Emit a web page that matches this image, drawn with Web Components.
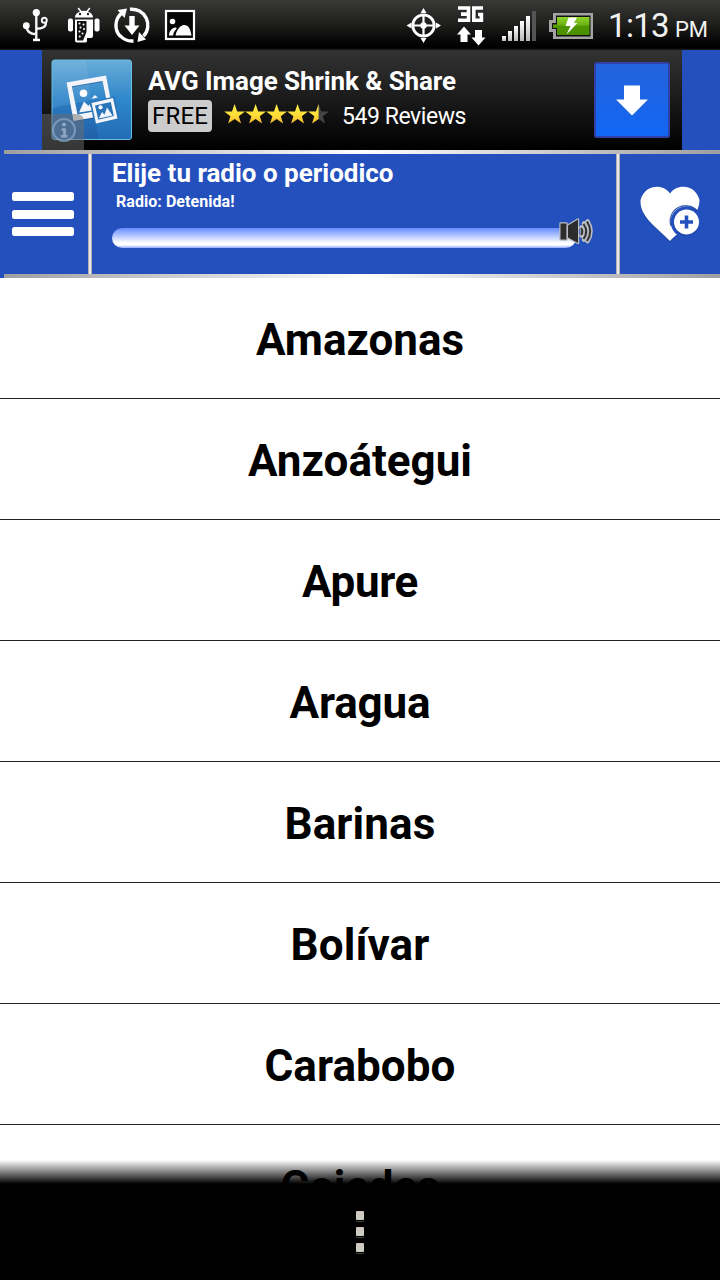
<!DOCTYPE html>
<html lang="es">
<head>
<meta charset="utf-8">
<title>Radios</title>
<style>
html,body{
    margin:0;
    padding:0;
}
body{
    width:720px;
    height:1280px;
    overflow:hidden;
    background:#fff;
    font-family:Roboto,"Liberation Sans",sans-serif;
}
</style>
</head>
<body>
<radio-app>
    <status-bar></status-bar>
    <ad-banner></ad-banner>
    <player-bar></player-bar>
    <state-list>
        <state-row w="208">Amazonas</state-row>
        <state-row w="224">Anzoátegui</state-row>
        <state-row w="116">Apure</state-row>
        <state-row w="141">Aragua</state-row>
        <state-row w="151">Barinas</state-row>
        <state-row w="139">Bolívar</state-row>
        <state-row w="191">Carabobo</state-row>
        <state-row w="159">Cojedes</state-row>
    </state-list>
    <bottom-menu></bottom-menu>
</radio-app>

<script>
// text with a fixed width, the letter spacing takes up the difference
class FitLabel extends HTMLElement{
    constructor(){
        super();
        this.attachShadow({mode:'open'});
        this.shadowRoot.innerHTML = `
        <style>
        :host{ display:inline-block; white-space:nowrap; }
        span{ display:inline-block; }
        </style>
        <span><slot></slot></span>
        `;
    }

    connectedCallback(){
        let span = this.shadowRoot.querySelector("span");
        let want = Number(this.getAttribute("w"));
        let width = span.getBoundingClientRect().width;
        let count = this.textContent.length;
        if (want && width && count){
            span.style.letterSpacing = (want - width) / count + "px";
        }
    }
}

class RadioApp extends HTMLElement{
    constructor(){
        super();
        this.attachShadow({mode:'open'});
        this.shadowRoot.innerHTML = `
        <style>
        :host{
            display:flex;
            flex-direction:column;
            position:relative;
            width:720px;
            height:1280px;
            overflow:hidden;
        }
        </style>
        <slot></slot>
        `;
    }
}

class StatusBar extends HTMLElement{
    constructor(){
        super();
        this.attachShadow({mode:'open'});
    }

    connectedCallback(){
        this.shadowRoot.innerHTML = `
        <style>
        :host{
            display:flex;
            flex:none;
            height:50px;
            justify-content:space-between;
            color:#f2f2f2;
            background:linear-gradient(#393937 0,#1d1d1c 25px,#000 46px,#000 48px,#1c1c1c 50px);
        }
        svg{ display:block; flex:none; }
        .right{ display:flex; }
        .clock{
            display:flex;
            align-items:baseline;
            width:112px;
            padding-top:7px;
            box-sizing:border-box;
            line-height:38px;
        }
        .time{ font-size:33px; width:67px; }
        .pm{ font-size:22px; }
        </style>
        <svg width="220" height="50" viewBox="0 0 220 50" fill="#fff" stroke="none">
            <g fill="none" stroke="#f4f4f4" stroke-width="2.4">
                <path d="M36.3 12V39M26.5 26c0 6 4 8 9.8 8.3M36.3 28.8c6 0 10-2 9.500-6.500"/>
                <circle cx="44.300" cy="20.300" r="2.500" stroke-width="2"/>
            </g>
            <circle cx="36.300" cy="12.500" r="3.600"/>
            <circle cx="26.300" cy="25.700" r="3.400"/>
            <rect x="33" y="38.700" width="7" height="2.500"/>
            <g>
                <path d="M75 17.500c0-3.500 3-5 5-6l-2.500-3 1.200-.9 2.900 3.300q2.400-.5 4.800 0l2.900-3.300 1.200.9-2.500 3c2 1 5 2.500 5 6z"/>
                <rect x="68" y="18.500" width="5" height="13" rx="2"/>
                <rect x="94.500" y="18.500" width="5" height="13" rx="2"/>
                <path d="M75 19.500h18V36q0 2-2 2h-4v3q0 1.500-2 1.500h-8q-2 0-2-2z"/>
            </g>
            <path d="M77 21H86.500v11l-3.500 8.500h-6z" fill="#141414"/>
            <g fill="#fff">
                <circle cx="80" cy="14" r="1.200" fill="#222"/><circle cx="88" cy="14" r="1.200" fill="#222"/>
                <circle cx="79.500" cy="23.500" r="1"/><circle cx="83.500" cy="24.500" r="1"/><circle cx="80.500" cy="27.500" r="1"/>
                <circle cx="84" cy="29" r="1"/><circle cx="79.500" cy="31.500" r="1"/><circle cx="82.500" cy="33.500" r="1"/><circle cx="79.800" cy="36.500" r="1"/>
            </g>
            <g fill="none" stroke="#fff" stroke-width="3.400">
                <path d="M120.500 36.500A16 16 0 0 1 122 12.800M130 9.300A16 16 0 0 1 143.500 36.200M133.500 41A16 16 0 0 1 120 35.500"/>
            </g>
            <path d="M117.500 10l9.500-1.500-2.500 9.500zM137.500 42l1.500-10 7 7.500zM129.300 16h5.400v9.500h4.800l-7.500 9.500-7.500-9.500h4.800z"/>
            <rect x="166" y="11" width="28" height="28" fill="#050505" stroke="#fff" stroke-width="2.200"/>
            <circle cx="172.500" cy="21.500" r="2.800"/>
            <path d="M169 35.500c0-4 3-8 6.500-8 1.500 0 1.300.7.700 1.800-2 2-3 4-3 6.200zM175.500 35.500c1-5 4.500-10.500 8.700-10.500s6.300 4 7.300 10.500z"/>
        </svg>
        <div class="right">
            <svg width="208" height="50" viewBox="400 0 208 50" fill="#fff">
                <defs>
                    <linearGradient id="sig" x2="0" y2="1"><stop offset="0" stop-color="#fff"/><stop offset="1" stop-color="#b8b8b8"/></linearGradient>
                    <linearGradient id="bat" x2="0" y2="1"><stop offset="0" stop-color="#8fd42b"/><stop offset=".45" stop-color="#6ab012"/><stop offset=".5" stop-color="#4f9600"/><stop offset="1" stop-color="#4a8d00"/></linearGradient>
                </defs>
                <circle cx="423.500" cy="25.500" r="10.700" fill="none" stroke="#fff" stroke-width="2.800"/>
                <path d="M423.500 14V37M412 25.500H435" stroke="#fff" stroke-width="2.200"/>
                <circle cx="423.500" cy="25.500" r="3.200"/>
                <path d="M423.500 8l3 5h-6zM423.500 43l3-5h-6zM406.500 25.500l5-3v6zM441 25.500l-5-3v6z"/>
                <path d="M458 8H468.500V20.200H458M461 14.100H468.500M483 8H473.800V20.200H481.400V14.500H478" fill="none" stroke="#fff" stroke-width="3.600"/>
                <path d="M464 26.500l7 8h-3.500v7.500h-7v-7.500H457zM478.500 45.500l-7-8h3.500V30h7v7.500h3.500z"/>
                <g fill="url(#sig)">
                    <rect x="502" y="36" width="4" height="5"/>
                    <rect x="508" y="31" width="4" height="10"/>
                    <rect x="514" y="26" width="4" height="15"/>
                    <rect x="520" y="21" width="4" height="20"/>
                    <rect x="526" y="16" width="4" height="25"/>
                </g>
                <rect x="532" y="11" width="4" height="30" fill="#555"/>
                <path d="M553 13H593V39H553V32H549V20H553z" fill="#a3a3a3"/>
                <path d="M556 15.500H590.500V36.500H556V29H552V23H556z" fill="#111"/>
                <path d="M557 17H589.500V35H557V28H553V24.500H557z" fill="url(#bat)"/>
                <path d="M568.500 17.500h8.500l-3 5.500h3.500L566.500 34.500l4-8.500h-5z"/>
            </svg>
            <div class="clock">
                <fit-label class="time" w="61">1:13</fit-label>
                <fit-label class="pm" w="33">PM</fit-label>
            </div>
        </div>
        `;
    }
}

class AdBanner extends HTMLElement{
    constructor(){
        super();
        this.attachShadow({mode:'open'});
    }

    connectedCallback(){
        this.shadowRoot.innerHTML = `
        <style>
        :host{
            display:flex;
            flex:none;
            justify-content:center;
            height:100px;
            padding:0 38px 0 42px;
            background:#2450be;
        }
        .ad{
            display:flex;
            flex:1;
            box-sizing:border-box;
            padding-right:12px;
            align-items:center;
            color:#fff;
            background:linear-gradient(#333,#000);
        }
        svg{ display:block; flex:none; }
        .info{ flex:1; padding:0 0 4px 12px; }
        .title{ font-size:26px; font-weight:bold; line-height:32px; }
        .sub{ display:flex; align-items:center; height:32px; margin-top:3px; }
        .free{
            width:64px;
            height:32px;
            border-radius:4px;
            background:#ccc;
            color:#000;
            font-size:24px;
            line-height:33px;
            text-align:center;
        }
        .stars{ margin:0 12px 3px 12px; }
        .reviews{ font-size:23px; line-height:33px; padding-top:1px; }
        .get{
            display:flex;
            align-items:center;
            justify-content:center;
            box-sizing:border-box;
            width:76px;
            height:76px;
            border:2px solid #3040a8;
            border-radius:3px;
            background:linear-gradient(#2463dc,#1166f2);
        }
        .get svg{ margin-bottom:3px; }
        </style>
        <div class="ad">
            <svg width="94" height="100" viewBox="42 50 94 100">
                <defs>
                    <linearGradient id="app" x2="0" y2="1"><stop offset="0" stop-color="#68add9"/><stop offset=".5" stop-color="#2f85c9"/><stop offset="1" stop-color="#2364ae"/></linearGradient>
                </defs>
                <rect x="52" y="60" width="79.500" height="79.500" rx="2.500" fill="url(#app)" stroke="#69bfdf"/>
                <path d="M52.500 60.500H86L91 100 52.500 108z" fill="#fff" opacity=".07"/>
                <path d="M52.500 108L91 100 99 139H52.500z" fill="#134a94" opacity=".15"/>
                <path d="M91 100L131 92V139H99z" fill="#2a9be0" opacity=".15"/>
                <path d="M66.500 83.500L106 76.500 113.500 115 73.500 122zM71.800 87.300L77.500 117 108.200 111.500 102.500 82z" fill="#173f77" fill-rule="evenodd" opacity=".4"/>
                <path d="M66.500 82.500L106 75.500 113.500 114 73.500 121zM71.800 86.300L77.500 114.500 108.200 109 102.500 81z" fill="#f3f5fa" fill-rule="evenodd"/>
                <circle cx="83.500" cy="93.300" r="3.800" fill="#fff"/>
                <path d="M79 112.500L84 101.500 88.500 106 89.500 104 92 110.500zM91.500 99L94.500 95 98 97.500z" fill="#f3f5fa"/>
                <path d="M90 101.500L114.500 96.500 119.500 119.500 94.500 125z" fill="#2a74b9"/>
                <path d="M91.500 103L113 98 117.500 118.500 96 123.500zM95 105.500L98.300 119.700 113.800 116 110.800 102z" fill="#f3f5fa" fill-rule="evenodd"/>
                <circle cx="100.500" cy="107.300" r="2.100" fill="#fff"/>
                <path d="M98.800 118.500L102 112 104.500 114.500 107 107.500 112.500 115.500z" fill="#f3f5fa"/>
                <path d="M42 114H76Q84 114 84 122V150H42z" fill="#6d6d6d" opacity=".5"/>
                <g opacity=".75">
                    <circle cx="64" cy="130" r="11" fill="#4f6f94" stroke="#86a4c8" stroke-width="2.200"/>
                    <circle cx="64" cy="124.500" r="2" fill="#a8bdd8"/>
                    <path d="M61.500 129.500H64.500V136M61 136.300h6.500" fill="none" stroke="#a8bdd8" stroke-width="2.600"/>
                </g>
            </svg>
            <div class="info">
                <div class="title"><fit-label w="308">AVG Image Shrink &amp; Share</fit-label></div>
                <div class="sub">
                    <div class="free"><fit-label w="56">FREE</fit-label></div>
                    <svg class="stars" width="106" height="22" viewBox="0 0 106 22">
                        <defs>
                            <linearGradient id="gold" x2="0" y2="1"><stop offset="0" stop-color="#fff04a"/><stop offset=".6" stop-color="#ffdc36"/><stop offset="1" stop-color="#f5b52c"/></linearGradient>
                            <path id="star" d="M10.600 1L13.200 8.400 21 8.500 14.800 13.200 17.100 20.500 10.600 16.100 4.100 20.500 6.400 13.200 .2 8.500 8 8.400z"/>
                            <clipPath id="half"><rect width="10.600" height="22"/></clipPath>
                        </defs>
                        <g fill="url(#gold)">
                            <use href="#star"/>
                            <use href="#star" x="21"/>
                            <use href="#star" x="42"/>
                            <use href="#star" x="63"/>
                        </g>
                        <g transform="translate(84 0)">
                            <use href="#star" fill="#444"/>
                            <use href="#star" fill="url(#gold)" clip-path="url(#half)"/>
                        </g>
                    </svg>
                    <fit-label class="reviews" w="124">549 Reviews</fit-label>
                </div>
            </div>
            <div class="get">
                <svg width="34" height="34" viewBox="0 0 34 34"><path d="M9 3.500H25V17.500H33L17 33.500 1 17.500H9z" fill="#fff"/></svg>
            </div>
        </div>
        `;
    }
}

class PlayerBar extends HTMLElement{
    constructor(){
        super();
        this.attachShadow({mode:'open'});
    }

    connectedCallback(){
        this.shadowRoot.innerHTML = `
        <style>
        :host{
            display:block;
            flex:none;
            padding-left:4px;
            background:#2450be;
        }
        .line{ height:4px; background:linear-gradient(90deg,#9f9f9f,#fff 50%,#9f9f9f); }
        .bar{ display:flex; height:120px; }
        .sep{
            width:4px;
            box-sizing:border-box;
            border:solid #b0aeb2;
            border-width:0 1px;
            background:#e9e9e9;
        }
        .menu{
            display:flex;
            flex-direction:column;
            justify-content:center;
            gap:8.500px;
            width:84px;
            padding-left:8px;
            box-sizing:border-box;
        }
        .menu i{ width:62px; height:9px; border-radius:2.500px; background:#fff; }
        .center{ width:524px; padding-left:20px; box-sizing:border-box; color:#fff; font-weight:bold; }
        .title{ font-size:26px; line-height:30px; padding-top:4px; }
        .status{ font-size:16px; line-height:20px; padding:4px 0 0 4px; }
        .fav{ width:100px; }
        svg{ display:block; }
        </style>
        <div class="line"></div>
        <div class="bar">
            <div class="menu"><i></i><i></i><i></i></div>
            <div class="sep"></div>
            <div class="center">
                <div class="title"><fit-label w="281.500">Elije tu radio o periodico</fit-label></div>
                <div class="status"><fit-label w="118.500">Radio: Detenida!</fit-label></div>
                <svg width="490" height="40" viewBox="112 212 490 40">
                    <defs>
                        <linearGradient id="vol" x2="0" y2="1"><stop offset="0" stop-color="#648cff"/><stop offset=".75" stop-color="#fff"/><stop offset=".85" stop-color="#fff"/><stop offset="1" stop-color="#8eaaff"/></linearGradient>
                    </defs>
                    <rect x="112" y="228" width="464" height="20" rx="10" fill="url(#vol)"/>
                    <g fill="none" stroke="#b9bcc2" stroke-width="4.600" stroke-linecap="round">
                        <path d="M581.500 227.500q2.500 4 0 8M584 223.500q5.500 8 0 16M587.500 221.500q6 10 0 19.500"/>
                    </g>
                    <g stroke="#b9bcc2" stroke-width="2.400" fill="#2c2c2c" paint-order="stroke" stroke-linejoin="round">
                        <rect x="560.500" y="223.500" width="6" height="16"/>
                        <path d="M568 225.500L578 219.500V243L568 237.500z"/>
                    </g>
                    <g fill="none" stroke="#333" stroke-width="2">
                        <path d="M581 228q2.500 3.500 0 7M583.500 224q5.500 7.500 0 15M587 221.500q6.500 10 0 19.500"/>
                    </g>
                </svg>
            </div>
            <div class="sep"></div>
            <div class="fav">
                <svg width="100" height="120" viewBox="620 154 100 120">
                    <path d="M670 193.500C664 184 645.500 183 640.500 200C639.500 216 655 226 670 241C680 231 699.500 217 699.500 200C695 183 676 184 670 193.500z" fill="#173f99" transform="translate(0 1.500)" opacity=".6"/>
                    <path d="M670 193.500C664 184 645.500 183 640.500 200C639.500 216 655 226 670 241C680 231 699.500 217 699.500 200C695 183 676 184 670 193.500z" fill="#fff"/>
                    <circle cx="686.500" cy="222" r="15.800" fill="#2450be"/>
                    <path d="M671 226a15.500 15.500 0 0 1 26-15.500" fill="none" stroke="#173f99" stroke-width="1.300" opacity=".8"/>
                    <circle cx="686.500" cy="223.300" r="12.500" fill="#173f99" opacity=".6"/>
                    <circle cx="686.500" cy="222" r="12.500" fill="#fff"/>
                    <path d="M686.500 215.500v13M680 222h13" stroke="#2450be" stroke-width="3.600"/>
                </svg>
            </div>
        </div>
        <div class="line"></div>
        `;
    }
}

class StateList extends HTMLElement{
    constructor(){
        super();
        this.attachShadow({mode:'open'});
        this.shadowRoot.innerHTML = `
        <style>
        :host{ display:flex; flex-direction:column; flex:none; }
        </style>
        <slot></slot>
        `;
    }
}

class StateRow extends HTMLElement{
    constructor(){
        super();
        this.attachShadow({mode:'open'});
    }

    connectedCallback(){
        this.shadowRoot.innerHTML = `
        <style>
        :host{
            display:flex;
            align-items:center;
            justify-content:center;
            box-sizing:border-box;
            height:121px;
            padding-top:3px;
            border-bottom:1px solid #222;
            color:#000;
            font-size:44px;
            font-weight:bold;
        }
        </style>
        <fit-label w="${this.getAttribute("w")}">${this.textContent}</fit-label>
        `;
    }
}

class BottomMenu extends HTMLElement{
    constructor(){
        super();
        this.attachShadow({mode:'open'});
        // lies over the end of the list
        this.shadowRoot.innerHTML = `
        <style>
        :host{
            display:flex;
            flex-direction:column;
            align-items:center;
            gap:7px;
            position:absolute;
            left:0;
            right:0;
            bottom:0;
            height:120px;
            padding-top:51px;
            box-sizing:border-box;
            background:linear-gradient(transparent,#000 24px);
        }
        i{
            width:8px;
            height:9px;
            border-radius:1px;
            background:#cfcbc4;
            box-shadow:0 1px 0 #000,0 2px 0 #444;
        }
        </style>
        <i></i><i></i><i></i>
        `;
    }
}

customElements.define('fit-label',FitLabel);
customElements.define('radio-app',RadioApp);
customElements.define('status-bar',StatusBar);
customElements.define('ad-banner',AdBanner);
customElements.define('player-bar',PlayerBar);
customElements.define('state-list',StateList);
customElements.define('state-row',StateRow);
customElements.define('bottom-menu',BottomMenu);
</script>
</body>
</html>
